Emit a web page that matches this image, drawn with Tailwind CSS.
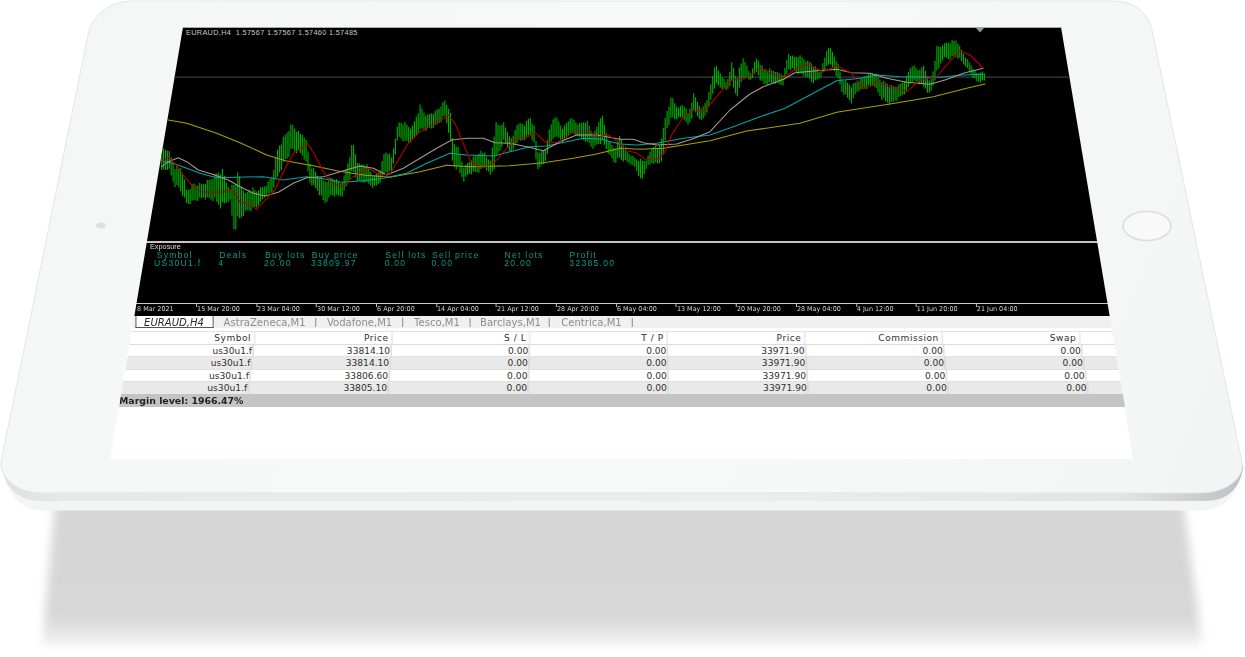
<!DOCTYPE html>
<html>
<head>
<meta charset="utf-8">
<script src="https://cdn.jsdelivr.net/npm/@tailwindcss/browser@4"></script>
</head>
<body class="bg-white">
<div class="relative w-[1245px] h-[657px] overflow-hidden bg-white font-['DejaVu_Sans',sans-serif]">
  <svg class="absolute inset-0" width="1245" height="657" viewBox="0 0 1245 657">
    <defs>
      <filter id="sb" x="-5%" y="-10%" width="110%" height="120%"><feGaussianBlur stdDeviation="5"/></filter>
      <filter id="ln" x="-2%" y="-20%" width="104%" height="140%"><feGaussianBlur stdDeviation=".2"/></filter>
      <linearGradient id="sf" x1="0" y1="500" x2="0" y2="652" gradientUnits="userSpaceOnUse">
        <stop offset="0" stop-color="#d6d6d6"/><stop offset=".76" stop-color="#d7d7d7"/><stop offset=".88" stop-color="#e6e6e6"/><stop offset="1" stop-color="#ffffff"/>
      </linearGradient>
      <linearGradient id="side" x1="0" y1="0" x2="1245" y2="0" gradientUnits="userSpaceOnUse">
        <stop offset="0" stop-color="#dcdfe0"/><stop offset=".05" stop-color="#e6e8e9"/><stop offset=".6" stop-color="#ebedee"/><stop offset=".9" stop-color="#e2e4e6"/><stop offset=".97" stop-color="#c8cbce"/><stop offset="1" stop-color="#bcc0c4"/>
      </linearGradient>
      <linearGradient id="face" x1="0" y1="0" x2="1245" y2="493" gradientUnits="userSpaceOnUse">
        <stop offset="0" stop-color="#f4f5f5"/><stop offset=".5" stop-color="#f8f9f9"/><stop offset="1" stop-color="#f3f4f4"/>
      </linearGradient>
      <clipPath id="cc"><polygon points="183,27 1061,27 1097,241 147,241"/></clipPath>
    </defs>
    <polygon points="55,500 1183,500 1203,646 42,646" fill="url(#sf)" filter="url(#sb)"/>
    <path d="M2,462 C4,495 22,510.5 42,510.5 L1200,510.5 C1226,510.5 1241,492 1243,462 Z" fill="#f3f4f4"/>
    <path d="M2,468 C6,490 20,501 42,501 L1205,501 C1226,501 1240,490 1243.5,466 Z" fill="url(#side)"/>
    <path d="M133,1 L1112,1 C1132,1 1147,10 1152,30 L1242,462 C1245,478 1226,493 1200,493 L40,493 C18,493 0,478 1,462 L88,35 C92,15 110,1 133,1 Z" fill="url(#face)" stroke="#e3e5e6" stroke-width="1"/>
    <ellipse cx="101" cy="225.5" rx="5" ry="3" fill="#dfe0e0"/>
    <ellipse cx="1147" cy="226" rx="24" ry="14.5" fill="#f9f9f9" stroke="#dcdddd" stroke-width="1.5"/>
    <polygon points="183,27 1061,27 1133,459 110,459" fill="#ffffff"/>
    <polygon points="183,27 1061,27 1097,241 147,241" fill="#000000"/>
    <g clip-path="url(#cc)">
      <rect x="170" y="76.5" width="900" height="1.2" fill="#3a4045"/>
      <rect x="170" y="26" width="900" height="2" fill="#a9abad"/>
      <g filter="url(#ln)">
      <path id="bars" d="" stroke="#00aa00" stroke-width="1.15" fill="none"/>
      <g fill="none" stroke-width="3.2" stroke-linejoin="round" stroke-linecap="round" transform="translate(150,20) scale(.33333)">
        <polyline stroke="#a8a000" points="55,300 110,310 200,340 270,368 350,405 410,423 490,437 560,452 640,465 720,472 810,455 890,436 960,440 1080,437 1180,428 1270,415 1340,402 1410,385"/>
        <polyline stroke="#00a5a5" points="35,422 75,432 110,445 150,460 200,473 260,472 340,470 400,480 470,470 530,478 575,487 640,482 700,475 770,460 830,430 900,400 950,405 1030,408 1080,395 1140,380 1190,378 1250,365 1300,355 1350,357 1410,372"/>
        <polyline stroke="#a89a8c" points="35,440 55,425 85,413 110,425 145,450 185,462 235,480 270,500 310,520 345,528 385,517 430,490 470,473 520,470 570,455 630,438 670,445 710,465 760,445 810,415 860,385 905,360 950,355 1000,355 1035,368 1080,370 1130,380 1180,392 1230,365 1280,345 1340,345 1410,358"/>
        <polyline stroke="#b80000" points="35,425 55,412 75,430 100,465 125,495 150,515 185,517 220,515 250,512 270,545 295,552 320,568 345,540 375,510 400,455 430,400 472,370 495,405 520,455 545,490 575,500 610,470 655,445 690,465 720,462 745,420 775,370 810,335 850,315 895,285 915,310 940,370 960,420 985,442 1010,440 1040,420 1070,385 1100,355 1125,355 1155,337 1190,370 1230,365 1270,335 1320,335 1345,350 1375,345 1410,370"/>
      </g>
      <g fill="none" stroke-width="3.2" stroke-linejoin="round" stroke-linecap="round" transform="translate(620,20) scale(.33333)">
        <polyline stroke="#a8a000" points="0,385 60,388 130,385 270,362 380,333 540,310 650,277 810,252 940,230 1040,205 1095,192"/>
        <polyline stroke="#00a5a5" points="0,372 50,375 110,370 190,355 270,345 340,320 420,290 495,265 560,230 650,182 720,175 770,165 840,170 960,172 1030,165 1090,163"/>
        <polyline stroke="#a89a8c" points="0,358 40,358 70,368 110,375 170,372 215,358 270,335 330,270 390,222 430,200 490,178 525,158 590,152 650,148 695,158 750,160 800,175 860,187 930,193 975,180 1030,160 1090,145"/>
        <polyline stroke="#b00000" points="0,370 20,393 50,398 75,418 115,418 135,395 155,345 190,290 220,272 255,272 285,235 320,195 340,178 370,178 420,145 490,175 515,155 560,132 610,155 650,137 695,160 730,205 750,200 770,185 860,215 900,180 950,170 975,140 1020,92 1050,105 1090,145"/>
      </g>
      </g>
      <rect x="672.2" y="171.8" width="1.2" height="1" fill="#000088"/>
      <polygon points="976,28 984,28 980,32.5" fill="#8b9bab"/>
      <text x="186" y="35" fill="#c8c8c8" font-size="7.3" font-family="Liberation Sans" letter-spacing=".33">EURAUD,H4&#160;&#160;1.57567 1.57567 1.57460 1.57485</text>
    </g>
  </svg>

  <div class="absolute left-0 top-[241px] w-[1245px] h-[166px] flex flex-col blur-[0.35px] [clip-path:polygon(147px_0,1097px_0,1125px_100%,119px_100%)]">
    <div class="h-[2px] shrink-0 bg-[#c4c6c8]"></div>

    <div class="h-[60px] shrink-0 bg-black font-['Liberation_Sans',sans-serif] text-[#0a9a88] text-[9px] tracking-[1.3px] leading-[8px] pt-[8px] relative">
      <div class="absolute left-[150px] top-0 text-[7.3px] tracking-normal text-[#dcdcdc] leading-[8px]">Exposure</div>
      <div class="ml-[102px] w-[1040px] pl-[31px] scale-x-[0.9545] grid grid-cols-[67px_48px_49px_77px_49px_76px_68px_1fr]">
        <span class="pl-[1.5px]">Symbol</span><span>Deals</span><span>Buy lots</span><span>Buy price</span><span>Sell lots</span><span>Sell price</span><span>Net lots</span><span>Profit</span>
      </div>
      <div class="ml-[102px] w-[1040px] pl-[31px] scale-x-[0.957] grid grid-cols-[67px_48px_49px_77px_49px_76px_68px_1fr]">
        <span>US30U1.f</span><span>4</span><span>20.00</span><span>33809.97</span><span>0.00</span><span>0.00</span><span>20.00</span><span>32385.00</span>
      </div>
    </div>

    <div class="h-[13px] shrink-0 bg-black border-t border-[#c9c9c9] text-[6.6px] leading-[10px] text-[#d6d6d6] whitespace-nowrap">
      <div class="ml-[102px] w-[1040px] pl-[20.3px] scale-x-[0.9723] flex">
        <span class="w-[61.7px] shrink-0 pl-[1px]">8 Mar 2021</span>
        <span class="w-[61.7px] shrink-0 pl-[1px] relative before:absolute before:left-0 before:top-0 before:h-[3px] before:w-px before:bg-[#c9c9c9]">15 Mar 20:00</span>
        <span class="w-[61.7px] shrink-0 pl-[1px] relative before:absolute before:left-0 before:top-0 before:h-[3px] before:w-px before:bg-[#c9c9c9]">23 Mar 04:00</span>
        <span class="w-[61.7px] shrink-0 pl-[1px] relative before:absolute before:left-0 before:top-0 before:h-[3px] before:w-px before:bg-[#c9c9c9]">30 Mar 12:00</span>
        <span class="w-[61.7px] shrink-0 pl-[1px] relative before:absolute before:left-0 before:top-0 before:h-[3px] before:w-px before:bg-[#c9c9c9]">6 Apr 20:00</span>
        <span class="w-[61.7px] shrink-0 pl-[1px] relative before:absolute before:left-0 before:top-0 before:h-[3px] before:w-px before:bg-[#c9c9c9]">14 Apr 04:00</span>
        <span class="w-[61.7px] shrink-0 pl-[1px] relative before:absolute before:left-0 before:top-0 before:h-[3px] before:w-px before:bg-[#c9c9c9]">21 Apr 12:00</span>
        <span class="w-[61.7px] shrink-0 pl-[1px] relative before:absolute before:left-0 before:top-0 before:h-[3px] before:w-px before:bg-[#c9c9c9]">28 Apr 20:00</span>
        <span class="w-[61.7px] shrink-0 pl-[1px] relative before:absolute before:left-0 before:top-0 before:h-[3px] before:w-px before:bg-[#c9c9c9]">6 May 04:00</span>
        <span class="w-[61.7px] shrink-0 pl-[1px] relative before:absolute before:left-0 before:top-0 before:h-[3px] before:w-px before:bg-[#c9c9c9]">13 May 12:00</span>
        <span class="w-[61.7px] shrink-0 pl-[1px] relative before:absolute before:left-0 before:top-0 before:h-[3px] before:w-px before:bg-[#c9c9c9]">20 May 20:00</span>
        <span class="w-[61.7px] shrink-0 pl-[1px] relative before:absolute before:left-0 before:top-0 before:h-[3px] before:w-px before:bg-[#c9c9c9]">28 May 04:00</span>
        <span class="w-[61.7px] shrink-0 pl-[1px] relative before:absolute before:left-0 before:top-0 before:h-[3px] before:w-px before:bg-[#c9c9c9]">4 Jun 12:00</span>
        <span class="w-[61.7px] shrink-0 pl-[1px] relative before:absolute before:left-0 before:top-0 before:h-[3px] before:w-px before:bg-[#c9c9c9]">11 Jun 20:00</span>
        <span class="w-[61.7px] shrink-0 pl-[1px] relative before:absolute before:left-0 before:top-0 before:h-[3px] before:w-px before:bg-[#c9c9c9]">21 Jun 04:00</span>
      </div>
    </div>

    <div class="h-[12px] shrink-0 bg-[#f0f0f0] text-[10.3px] leading-[12px] text-[#8e8e8e] whitespace-nowrap">
      <div class="ml-[102px] w-[1040px] pl-[21.5px] scale-x-[0.977] flex items-stretch h-full">
        <span class="w-[80px] shrink-0 bg-white border-x border-b border-[#555] text-center italic text-[#2a2a2a]">EURAUD,H4</span>
        <span class="w-[105.4px] shrink-0 text-center relative after:absolute after:right-0 after:top-[1.5px] after:h-[9px] after:w-px after:bg-[#888]">AstraZeneca,M1</span>
        <span class="w-[89px] shrink-0 text-center relative after:absolute after:right-0 after:top-[1.5px] after:h-[9px] after:w-px after:bg-[#888]">Vodafone,M1</span>
        <span class="w-[69.6px] shrink-0 text-center relative after:absolute after:right-0 after:top-[1.5px] after:h-[9px] after:w-px after:bg-[#888]">Tesco,M1</span>
        <span class="w-[80.8px] shrink-0 text-center relative after:absolute after:right-0 after:top-[1.5px] after:h-[9px] after:w-px after:bg-[#888]">Barclays,M1</span>
        <span class="w-[85px] shrink-0 text-center relative after:absolute after:right-0 after:top-[1.5px] after:h-[9px] after:w-px after:bg-[#888]">Centrica,M1</span>
      </div>
    </div>
    <div class="h-[4px] shrink-0 bg-white border-b border-[#e2e2e2]"></div>

    <div class="flex-1 flex flex-col text-[9.2px] leading-[12px] text-[#303030]">
      <div class="h-[13px] shrink-0 ml-[102px] w-[1040px] pl-[20px] scale-x-[0.9824] bg-white border-b border-[#dcdcdc] grid grid-cols-[127px_repeat(6,140px)_1fr] text-right tracking-[0.55px]">
        <span class="pr-[2.5px] border-r-2 border-[#ececec]">Symbol</span><span class="pr-[2.5px] border-r-2 border-[#ececec]">Price</span><span class="pr-[2.5px] border-r-2 border-[#ececec]">S / L</span><span class="pr-[2.5px] border-r-2 border-[#ececec]">T / P</span><span class="pr-[2.5px] border-r-2 border-[#ececec]">Price</span><span class="pr-[2.5px] border-r-2 border-[#ececec]">Commission</span><span class="pr-[2.5px] border-r-2 border-[#ececec]">Swap</span><span></span>
      </div>
      <div class="h-[12.25px] shrink-0 ml-[102px] w-[1040px] pl-[20px] scale-x-[0.9867] bg-white border-b border-[#e0e0e0] grid grid-cols-[127px_repeat(6,140px)_1fr] text-right">
        <span class="border-r-2 border-[#e4e4e4]">us30u1.f</span><span class="border-r-2 border-[#e4e4e4]">33814.10</span><span class="border-r-2 border-[#e4e4e4]">0.00</span><span class="border-r-2 border-[#e4e4e4]">0.00</span><span class="border-r-2 border-[#e4e4e4]">33971.90</span><span class="border-r-2 border-[#e4e4e4]">0.00</span><span class="border-r-2 border-[#e4e4e4]">0.00</span><span></span>
      </div>
      <div class="h-[12.25px] shrink-0 ml-[102px] w-[1040px] pl-[20px] scale-x-[0.9908] bg-[#e9e9e9] border-b border-[#e0e0e0] grid grid-cols-[127px_repeat(6,140px)_1fr] text-right">
        <span class="border-r-2 border-[#dcdcdc]">us30u1.f</span><span class="border-r-2 border-[#dcdcdc]">33814.10</span><span class="border-r-2 border-[#dcdcdc]">0.00</span><span class="border-r-2 border-[#dcdcdc]">0.00</span><span class="border-r-2 border-[#dcdcdc]">33971.90</span><span class="border-r-2 border-[#dcdcdc]">0.00</span><span class="border-r-2 border-[#dcdcdc]">0.00</span><span></span>
      </div>
      <div class="h-[12.25px] shrink-0 ml-[102px] w-[1040px] pl-[20px] scale-x-[0.995] bg-white border-b border-[#e0e0e0] grid grid-cols-[127px_repeat(6,140px)_1fr] text-right">
        <span class="border-r-2 border-[#e4e4e4]">us30u1.f</span><span class="border-r-2 border-[#e4e4e4]">33806.60</span><span class="border-r-2 border-[#e4e4e4]">0.00</span><span class="border-r-2 border-[#e4e4e4]">0.00</span><span class="border-r-2 border-[#e4e4e4]">33971.90</span><span class="border-r-2 border-[#e4e4e4]">0.00</span><span class="border-r-2 border-[#e4e4e4]">0.00</span><span></span>
      </div>
      <div class="h-[12.25px] shrink-0 ml-[102px] w-[1040px] pl-[20px] scale-x-[0.9992] bg-[#e9e9e9] grid grid-cols-[127px_repeat(6,140px)_1fr] text-right">
        <span class="border-r-2 border-[#dcdcdc]">us30u1.f</span><span class="border-r-2 border-[#dcdcdc]">33805.10</span><span class="border-r-2 border-[#dcdcdc]">0.00</span><span class="border-r-2 border-[#dcdcdc]">0.00</span><span class="border-r-2 border-[#dcdcdc]">33971.90</span><span class="border-r-2 border-[#dcdcdc]">0.00</span><span class="border-r-2 border-[#dcdcdc]">0.00</span><span></span>
      </div>
      <div class="flex-1 bg-[#c4c4c4] font-bold text-[#222] text-[9.4px] leading-[13px] pl-[119px]">Margin level: 1966.47%</div>
    </div>
  </div>
</div>
<script>
(function(){
  var a=[35,380,460,55,385,450,75,440,500,95,440,520,110,510,555,130,490,545,160,490,535,185,470,540,215,440,565,240,510,540,250,480,640,265,450,620,285,520,580,300,500,575,320,510,565,350,495,525,365,470,520,385,375,470,410,330,420,425,308,395,445,335,400,465,340,420,480,430,490,500,460,510,525,480,555,545,470,530,575,490,530,590,440,500,608,360,460,625,430,490,650,430,490,670,470,505,690,450,490,705,385,460,725,410,465,745,305,350,765,305,370,785,325,365,810,255,335,830,285,330,860,270,320,885,240,290,900,260,360,908,360,440,925,380,450,940,440,485,960,420,460,985,395,460,1005,395,440,1020,430,470,1035,310,440,1060,305,365,1085,360,400,1100,310,370,1125,310,360,1140,290,345,1155,325,380,1160,390,450,1185,395,430,1195,340,390,1213,280,350,1240,325,370,1260,290,340,1285,310,350,1310,300,370,1330,345,385,1355,275,370,1375,360,400,1395,385,430];
  var b=[0,340,420,20,395,425,45,415,440,65,420,490,80,420,440,100,370,430,115,385,435,130,320,415,140,270,330,155,228,300,175,265,295,190,250,295,205,280,320,222,218,275,245,270,305,265,225,270,285,130,200,305,165,205,320,190,210,335,125,190,350,170,235,370,105,175,390,165,180,410,110,160,430,145,195,460,150,190,490,165,195,505,95,150,520,110,150,540,105,165,555,115,170,580,130,190,600,160,175,625,75,130,640,100,150,655,135,180,665,175,215,695,195,250,710,185,215,740,165,205,760,155,195,785,180,240,815,195,255,840,195,230,860,170,215,875,130,185,895,150,190,912,135,205,930,190,225,940,145,195,950,80,165,970,70,115,985,65,120,1010,58,110,1030,100,130,1050,130,160,1070,160,185,1085,155,185,1097,165,180];
  var p=[],i;
  for(i=0;i<a.length;i+=3){p.push([150+a[i]/3,20+a[i+1]/3,20+a[i+2]/3]);}
  for(i=0;i<b.length;i+=3){p.push([620+b[i]/3,20+b[i+1]/3,20+b[i+2]/3]);}
  var s=12345;function r(){s=(s*1103515245+12345)&2147483647;return s/2147483647;}
  var d='',k=0,n=0;
  for(var x=p[0][0];x<p[p.length-1][0];x+=1.9){
    while(k<p.length-2&&p[k+1][0]<x)k++;
    var A=p[k],B=p[k+1],t=(x-A[0])/(B[0]-A[0]);
    if(t>1)t=1;
    var hi=A[1]+(B[1]-A[1])*t,lo=A[2]+(B[2]-A[2])*t,h=lo-hi;
    var saw=(n%4)/3;n++;
    var y1=hi-1+h*.14*saw+r()*h*.08,y2=lo+1-h*.14*(1-saw)-r()*h*.08;
    d+='M'+x.toFixed(1)+' '+y1.toFixed(1)+'V'+y2.toFixed(1);
  }
  document.getElementById('bars').setAttribute('d',d);
})();
</script>
</body>
</html>
